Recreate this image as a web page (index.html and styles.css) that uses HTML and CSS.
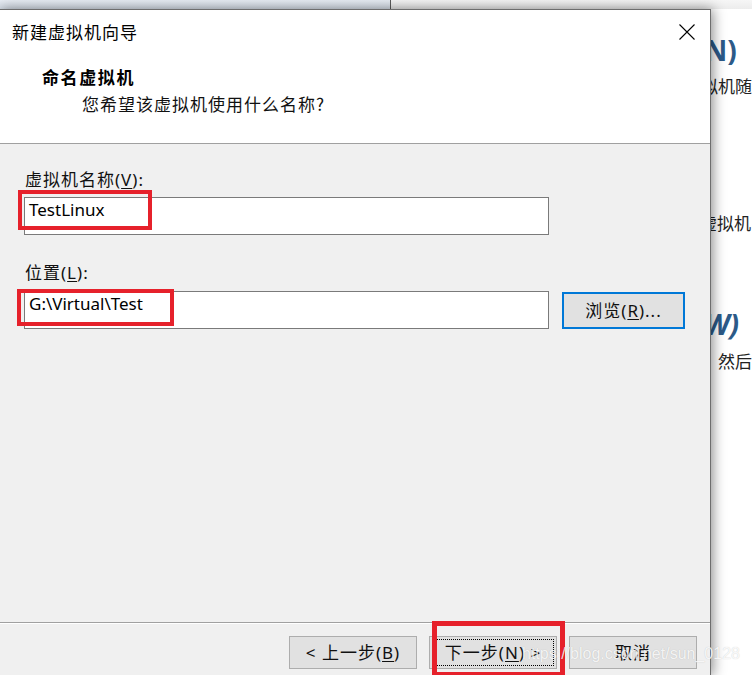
FILE: index.html
```html
<!DOCTYPE html>
<html lang="zh-CN">
<head>
<meta charset="utf-8">
<title>新建虚拟机向导</title>
<link rel="stylesheet" href="styles.css">
</head>
<body>
  <div class="desk">
    <div class="topband">
      <div class="tb-left"></div>
      <div class="tb-right"></div>
    </div>
    <div class="bgtext">
      <div class="bg-big bg-l1">(N)</div>
      <div class="bg-line bg-l2">虚拟机随</div>
      <div class="bg-line bg-l3">新建虚拟机</div>
      <div class="bg-big bg-it bg-l4">(W)</div>
      <div class="bg-line bg-l5">然后</div>
    </div>
  </div>

  <div class="dialog">
    <div class="header">
      <div class="title">新建虚拟机向导</div>
      <div class="close">
        <svg width="16" height="16" viewBox="0 0 16 16"><path d="M0.5 0.5 L15.5 15.5 M15.5 0.5 L0.5 15.5" stroke="#000" stroke-width="1.1" fill="none"/></svg>
      </div>
      <div class="heading">命名虚拟机</div>
      <div class="sub">您希望该虚拟机使用什么名称?</div>
    </div>
    <div class="content">
      <div class="label label1">虚拟机名称(<u>V</u>):</div>
      <div class="field field1">TestLinux</div>
      <div class="label label2">位置(<u>L</u>):</div>
      <div class="row">
        <div class="field field2">G:\Virtual\Test</div>
        <div class="btn browse">浏览(<u>R</u>)...</div>
      </div>
    </div>
    <div class="footer">
      <div class="btn">&lt; 上一步(<u>B</u>)</div>
      <div class="btn focused">下一步(<u>N</u>) &gt;</div>
      <div class="btn">取消</div>
    </div>
  </div>

  <div class="mark mark1"></div>
  <div class="mark mark2"></div>
  <div class="mark mark3"></div>
  <div class="watermark">https://blog.csdn.net/sun_0128</div>
</body>
</html>
```

FILE: styles.css
```css
html, body {
  margin: 0;
  padding: 0;
}
body {
  width: 752px;
  height: 675px;
  overflow: hidden;
  position: relative;
  background: #ffffff;
  font-family: "Noto Sans", "Noto Sans CJK SC", sans-serif;
  color: #000;
}
.desk {
  width: 752px;
  height: 675px;
  overflow: hidden;
}
.topband {
  display: flex;
  height: 9px;
}
.tb-left {
  width: 390px;
  background: linear-gradient(#e8edf4, #d9e1eb);
  border-right: 1px solid #5c5c5c;
}
.tb-right {
  flex: 1;
  background: linear-gradient(#f6f6f6, #ececec);
}
.bgtext {
  white-space: nowrap;
}
.bg-big {
  font-size: 28px;
  line-height: 30px;
  height: 30px;
  font-weight: 700;
  color: #2c5a88;
  margin-left: 695px;
}
.bg-it {
  font-style: italic;
}
.bg-line {
  font-family: "Noto Sans CJK SC", sans-serif;
  font-size: 17px;
  line-height: 22px;
  height: 22px;
  color: #222;
}
.bg-l1 { margin-top: 26px; }
.bg-l2 { margin-top: 10px; margin-left: 684px; }
.bg-l3 { margin-top: 115px; margin-left: 666px; }
.bg-l4 { margin-top: 75px; }
.bg-l5 { margin-top: 11px; margin-left: 718px; }

.dialog {
  position: absolute;
  left: -1px;
  top: 9px;
  width: 710px;
  height: 665px;
  border: 1px solid #6e6e6e;
  background: #f0f0f0;
  box-shadow: 2px 0 12px rgba(0, 0, 0, 0.45);
  display: flex;
  flex-direction: column;
}
.header {
  position: relative;
  height: 133px;
  background: #ffffff;
  border-bottom: 1px solid #a0a0a0;
  font-family: "Noto Sans CJK SC", sans-serif;
}
.title {
  margin: 11px 0 0 12px;
  font-size: 17px;
  line-height: 22px;
  letter-spacing: 1px;
}
.close {
  position: absolute;
  left: 679px;
  top: 14px;
  width: 16px;
  height: 16px;
}
.close svg { display: block; }
.heading {
  margin: 23px 0 0 42px;
  font-size: 17px;
  line-height: 22px;
  font-weight: 700;
  letter-spacing: 1.6px;
}
.sub {
  margin: 5px 0 0 82px;
  font-size: 17px;
  line-height: 22px;
  letter-spacing: 1px;
  color: #111;
}
.content {
  height: 478px;
  padding-left: 24px;
  box-sizing: border-box;
  padding-top: 25px;
}
.label {
  font-size: 17px;
  line-height: 22px;
  letter-spacing: 1px;
  padding-left: 1px;
  color: #111;
}
.label u { text-underline-offset: 2px; }
.field {
  box-sizing: border-box;
  width: 525px;
  height: 38px;
  border: 1px solid #7a7a7a;
  background: #fff;
  padding: 1px 0 0 4px;
  font-size: 17px;
  line-height: 22px;
}
.field1 { margin-top: 6px; }
.label2 { margin-top: 27px; }
.row {
  display: flex;
  align-items: flex-start;
  gap: 13px;
  margin-top: 7px;
}
.btn {
  box-sizing: border-box;
  width: 128px;
  height: 33px;
  border: 1px solid #adadad;
  background: #e1e1e1;
  display: flex;
  align-items: center;
  justify-content: center;
  font-size: 17px;
  line-height: 22px;
  letter-spacing: 1px;
  color: #111;
  white-space: nowrap;
}
.btn u { text-underline-offset: 2px; }
.browse {
  width: 123px;
  height: 37px;
  margin-top: 1px;
  border: 2px solid #0078d7;
}
.footer {
  border-top: 1px solid #a0a0a0;
  box-shadow: inset 0 1px 0 #ffffff;
  display: flex;
  justify-content: flex-end;
  gap: 12px;
  padding: 13px 13px 0 0;
  flex: 1;
}
.focused {
  outline: 1px dotted #000;
  outline-offset: -4px;
}

.mark {
  position: absolute;
  border: 4px solid #e6212b;
  box-sizing: border-box;
}
.mark1 { left: 18px; top: 190px; width: 134px; height: 40px; }
.mark2 { left: 17px; top: 289px; width: 157px; height: 37px; }
.mark3 { left: 432px; top: 621px; width: 133px; height: 56px; border-width: 5px; }

.watermark {
  position: absolute;
  left: 522px;
  top: 644px;
  font-family: "Liberation Sans", Arial, sans-serif;
  font-size: 16px;
  line-height: 20px;
  color: rgba(255, 255, 255, 0.85);
  text-shadow: 0 0 1px rgba(0, 0, 0, 0.2);
  white-space: nowrap;
}
```
